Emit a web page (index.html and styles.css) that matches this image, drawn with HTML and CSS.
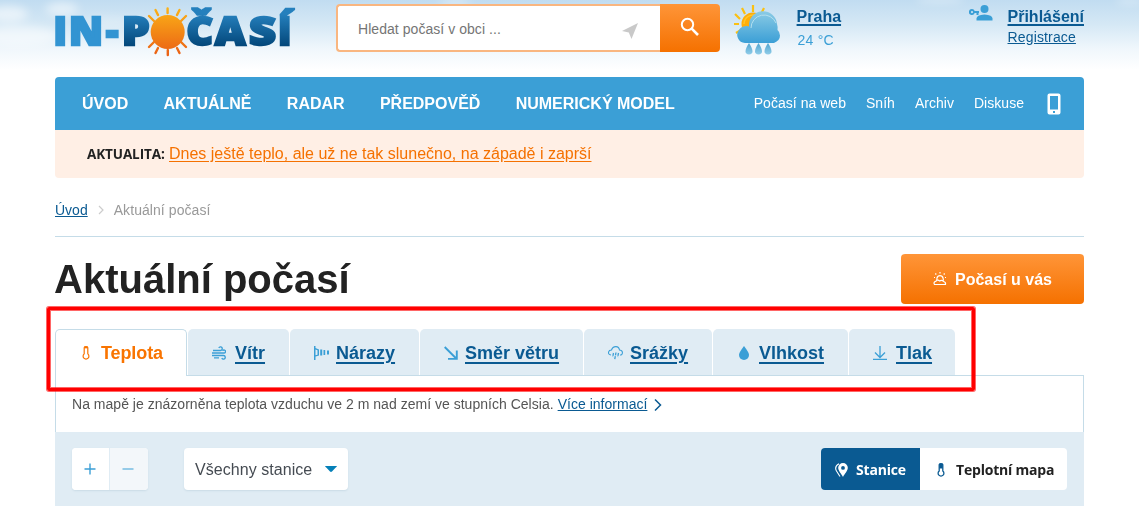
FILE: index.html
```
<!DOCTYPE html>
<html lang="cs">
<head>
<meta charset="utf-8">
<title>Aktuální počasí</title>
<link rel="stylesheet" href="styles.css">
</head>
<body>
<svg class="sky" width="1139" height="70" viewBox="0 0 1139 70" aria-hidden="true">
  <defs>
    <filter id="soft" x="-20%" y="-50%" width="140%" height="200%"><feGaussianBlur stdDeviation="5 4"/></filter>
    <linearGradient id="skyFill" x1="0" y1="0" x2="0" y2="1"><stop offset="0" stop-color="#c1dcf1"/><stop offset=".35" stop-color="#d5e8f5"/><stop offset=".7" stop-color="#f0f7fc"/><stop offset="1" stop-color="#fff"/></linearGradient>
  </defs>
  <rect width="1139" height="70" fill="url(#skyFill)"/>
  <g fill="#fff" filter="url(#soft)">
    <ellipse cx="8" cy="14" rx="20" ry="8" opacity=".55"/>
    <ellipse cx="62" cy="9" rx="16" ry="7" opacity=".5"/>
    <ellipse cx="18" cy="36" rx="40" ry="10" opacity=".5"/>
    <ellipse cx="110" cy="22" rx="24" ry="6" opacity=".2"/>
    <ellipse cx="455" cy="2" rx="16" ry="3" opacity=".5"/>
    <ellipse cx="940" cy="0" rx="24" ry="2" opacity=".6"/>
    <ellipse cx="1130" cy="1" rx="14" ry="3" opacity=".4"/>
  </g>
</svg>
<div class="page">
  <header class="header">
    <svg class="logo" width="242" height="60" viewBox="0 0 242 60">
      <defs>
        <linearGradient id="navy" gradientUnits="userSpaceOnUse" x1="0" y1="14" x2="0" y2="46"><stop offset="0" stop-color="#2580bd"/><stop offset="1" stop-color="#03477a"/></linearGradient>
        <linearGradient id="sun" gradientUnits="userSpaceOnUse" x1="0" y1="8" x2="0" y2="56"><stop offset="0" stop-color="#fbb117"/><stop offset="1" stop-color="#ea5f15"/></linearGradient>
      </defs>
      <g class="logo-text" lengthAdjust="spacingAndGlyphs">
        <g fill="#3294d2" stroke="#3294d2"><text x="-1.500" y="44.800">I</text><text x="14" y="44.800" textLength="34" lengthAdjust="spacingAndGlyphs">N</text><text x="51" y="44.800">-</text></g>
        <g fill="url(#navy)" stroke="url(#navy)"><text x="67" y="44.800" textLength="27.500" lengthAdjust="spacingAndGlyphs">P</text><text x="131.500" y="44.800" textLength="26.500" lengthAdjust="spacingAndGlyphs">Č</text><text x="160" y="44.800" textLength="30.500" lengthAdjust="spacingAndGlyphs">A</text><text x="194" y="44.800" textLength="27" lengthAdjust="spacingAndGlyphs">S</text><text x="223" y="44.800">Í</text></g>
      </g>
      <circle cx="112.700" cy="32" r="17" fill="url(#sun)"/>
      <path d="M112.600 13V8.500M112.800 50v5M122 15l2.500-5M103 15l-2.500-5M126 21l5-5M99 21l-5-5M126 42l5 5M99 42l-5 5M122 48l2.500 5M103 48l-2.500 5" stroke="url(#sun)" stroke-width="2.400" stroke-linecap="round"/>
    </svg>
    <form class="search">
      <div class="field"><span>Hledat počasí v obci ...</span>
        <svg width="16" height="16" viewBox="0 0 16 16"><path d="M16 0 9.500 16 6.800 9.500 0 8z" fill="#c9c9c9"/></svg>
      </div>
      <button class="search-btn" type="button" aria-label="Hledat"><svg width="20" height="20" viewBox="0 0 20 20" fill="none" stroke="#fff" stroke-width="2"><circle cx="7.500" cy="7.500" r="5.700"/><path d="M11.700 11.700 18 18" stroke-width="2.600"/></svg></button>
    </form>
    <svg class="weather" width="46" height="50" viewBox="0 0 46 50">
      <defs>
        <linearGradient id="cloud" x1="0" y1="0" x2="0" y2="1"><stop offset="0" stop-color="#8bcbe5"/><stop offset="1" stop-color="#3b9fd6"/></linearGradient>
        <linearGradient id="drop" x1="0" y1="0" x2="0" y2="1"><stop offset="0" stop-color="#4ea3cf"/><stop offset="1" stop-color="#91cde9"/></linearGradient>
      </defs>
      <path d="M19 7V0M27 9l3-6M11 9 8 3M32 13l4-4M6 14 1 9M5 19H0M7 25l-5 3" stroke="#fbc012" stroke-width="2.200"/>
      <circle cx="19" cy="19" r="11.500" fill="#ffae08"/><path d="M10 19a9 9 0 0 1 13-8" fill="none" stroke="#ffc62b" stroke-width="1.500"/>
      <path d="M11 38a8 8 0 0 1-6-13q2-4 8-4 1 0 2 .500A13.500 13.500 0 0 1 43 19q1 3 .500 6 2.500 2 2.500 5.500 0 5-6 7.500z" fill="url(#cloud)"/>
      <path d="M17 23a13 13 0 0 1 25-5" fill="none" stroke="#b4e0ef" stroke-width="1"/>
      <g fill="url(#drop)"><path d="M15 38q7 11 0 11.500Q8 49 15 38z"/><path d="M24.500 38q7 11 0 11.500-7-.500 0-11.500z"/><path d="M34 38q7 11 0 11.500-7-.500 0-11.500z"/></g>
    </svg>
    <div class="city"><a href="#">Praha</a><span>24 °C</span></div>
    <svg class="user" width="24" height="16" viewBox="0 0 24 16" fill="#3b9fd6"><circle cx="15.500" cy="4" r="4"/><path d="M7.500 15.500v-2q0-3.500 8-4 8 .500 8 4v2z"/><path fill-rule="evenodd" d="M3 4a3 3 0 0 1 2.700 2H10v2H9.500v2h-2V8H5.700A3 3 0 1 1 3 4zm0 2a1.100 1.100 0 1 0 0 2.200A1.100 1.100 0 0 0 3 6z"/></svg>
    <div class="account"><a class="login" href="#">Přihlášení</a><a class="register" href="#">Registrace</a></div>
  </header>

  <nav class="nav">
    <div class="nav-main"><a>ÚVOD</a><a>AKTUÁLNĚ</a><a>RADAR</a><a>PŘEDPOVĚĎ</a><a>NUMERICKÝ MODEL</a></div>
    <div class="nav-side"><a>Počasí na web</a><a>Sníh</a><a>Archiv</a><a>Diskuse</a>
      <svg width="14" height="22" viewBox="0 0 14 22"><path fill-rule="evenodd" fill="#fff" d="M2.500.500h9a2 2 0 0 1 2 2v17a2 2 0 0 1-2 2h-9a2 2 0 0 1-2-2v-17a2 2 0 0 1 2-2zM3 3v13.500h8V3zm3 15v2h2v-2z"/></svg>
    </div>
  </nav>
  <div class="news"><strong>AKTUALITA:</strong><a href="#">Dnes ještě teplo, ale už ne tak slunečno, na západě i zaprší</a></div>

  <div class="crumbs"><a href="#">Úvod</a><svg width="6" height="10" viewBox="0 0 6 10" fill="none" stroke="#ccc" stroke-width="1.200"><path d="m1 1 4 4-4 4"/></svg><span>Aktuální počasí</span></div>
  <div class="title-row">
    <h1>Aktuální počasí</h1>
    <a class="cta"><svg width="14" height="14" viewBox="0 0 14 14" fill="none" stroke="#fff" stroke-width="1.200"><path d="M3.800 8 4 6a3.100 3.100 0 0 1 6 0l.500 2.500M4 8.200q1.500-.500 2.500.800 2.500-1.500 4 .500 2.500.500 2 3H1.500Q0 10 3 9.200zM7 0v1.500M1 5.500h1M12 5.500h1M2.300 1.500l1 1M11.700 1.500l-1 1"/></svg><span>Počasí u vás</span></a>
  </div>

  <div class="tabs">
    <a class="tab active t1"><svg width="8" height="14" viewBox="0 0 8 14" fill="none" stroke="#f97400" stroke-width="1.200"><path d="M2.200 1.700q.3-1 1.800-1t1.800 1v6.200a2.900 2.900 0 1 1-3.600 0z"/><path d="M2.200 1.500h3.600" stroke-width="1.700"/></svg><span>Teplota</span></a>
    <a class="tab t2"><svg width="14" height="14" viewBox="0 0 14 14" fill="none" stroke="#3b9fd6" stroke-width="1.300"><path d="M1 4.500h7.500a1.800 1.800 0 1 0-1.700-2.500M0 7h12a1.500 1.500 0 1 0-1.300-2.200M0 9.500h11.500a1.800 1.800 0 1 1-1.700 2.500M2 11.900h5"/></svg><span>Vítr</span></a>
    <a class="tab t3"><svg width="15" height="14" viewBox="0 0 15 14" fill="#3b9fd6"><path d="M0 0h1.500v14H0zM1.500 2 5 3.500v6l-3.500 1V9.300l2-.5V4.200l-2-.8zM6.200 3.500h2v6h-2zM9.500 4h1.700v5H9.500zM13 4.500h2v4h-2z"/></svg><span>Nárazy</span></a>
    <a class="tab t4"><svg width="14" height="14" viewBox="0 0 14 14" fill="none" stroke="#3b9fd6" stroke-width="1.900"><path d="m.7 1 12 12M4 12.900h8.800V4.500"/></svg><span>Směr větru</span></a>
    <a class="tab t5"><svg width="15" height="14" viewBox="0 0 15 14" fill="none" stroke="#3b9fd6" stroke-width="1.100"><path d="M3 9Q0 8.500.600 6 1 4 3.500 4q1-3.500 4.500-3.400Q11 .700 11.500 4q2.500 0 2.900 2.200Q14.500 9 12 9"/><path d="m5.500 7-.8 4M8 6.500l-1.300 7M10.500 7l-.8 4" stroke-width="1.300" stroke-dasharray="3 .8"/></svg><span>Srážky</span></a>
    <a class="tab t6"><svg width="10" height="14" viewBox="0 0 10 14"><path d="M5 0q5 6.500 5 9a5 5 0 0 1-10 0q0-2.500 5-9z" fill="#3b9fd6"/></svg><span>Vlhkost</span></a>
    <a class="tab t7"><svg width="14" height="14" viewBox="0 0 14 14" fill="none" stroke="#3b9fd6" stroke-width="1.300"><path d="M7 0v11.500M2 6.500l5 5 5-5M0 13.300h14"/></svg><span>Tlak</span></a>
  </div>
  <div class="info"><span>Na mapě je znázorněna teplota vzduchu ve 2 m nad zemí ve stupních Celsia.</span><a href="#">Více informací</a><svg width="8" height="14" viewBox="0 0 8 14" fill="none" stroke="#0a5a92" stroke-width="1.500"><path d="m1 1.500 5.500 5.500L1 12.500"/></svg></div>
  <div class="toolbar">
    <div class="zoom"><button aria-label="Přiblížit"><svg width="12" height="12" viewBox="0 0 12 12" stroke="#3b9fd6" stroke-width="1.400"><path d="M6 .500v11M.500 6h11"/></svg></button><button class="off" aria-label="Oddálit"><svg width="12" height="12" viewBox="0 0 12 12" stroke="#76bce2" stroke-width="1.400"><path d="M.500 6h11"/></svg></button></div>
    <div class="select"><span>Všechny stanice</span><svg width="12" height="6" viewBox="0 0 12 6"><path d="M0 0h12q-.5 1-1.500 1.800L7 5.500q-1 .8-2 0L1.500 1.800Q.500 1 0 0z" fill="#0580b8"/></svg></div>
    <div class="switch">
      <a class="on"><svg width="13" height="14" viewBox="0 0 13 14"><path fill="#fff" fill-rule="evenodd" d="M8 0a4.800 4.800 0 0 1 4.800 4.800C12.800 8 9.500 11 8 14 6.500 11 3.200 8 3.200 4.800A4.800 4.800 0 0 1 8 0zm0 3a1.900 1.900 0 1 0 0 3.800A1.900 1.900 0 0 0 8 3z"/><path d="M4 .700Q-1 3.500 1.500 8 4 12 5 13.500" fill="none" stroke="#fff" stroke-width="1.100"/></svg><span>Stanice</span></a>
      <a class="map"><svg width="8" height="14" viewBox="0 0 8 14" fill="none" stroke="#0a5a92" stroke-width="1.300"><path d="M2.200 1.700q.3-1 1.800-1t1.800 1v6.200a2.900 2.900 0 1 1-3.600 0z"/><path d="M4 1v4.500" stroke-width="3.400"/></svg><span>Teplotní mapa</span></a>
    </div>
  </div>
</div>
<div class="highlight"></div>
</body>
</html>
```
FILE: styles.css
```
* { box-sizing: border-box; }
body { margin: 0; width: 1139px; height: 506px; overflow: hidden; position: relative; background: #fff; color: #222; font: 14px/20px "Liberation Sans", Arial, sans-serif; }
a { color: #0a5a92; }
svg { display: block; flex: none; }
span, strong, a { white-space: nowrap; }
.sky { position: absolute; left: 0; top: 0; z-index: -1; }
.page { width: 1029px; margin-left: 55px; }

.header { display: flex; height: 77px; align-items: flex-start; }
.logo { overflow: visible; }
.logo-text { font: 800 38.500px "Open Sans", sans-serif; stroke-width: 2.400px; }
.search { display: flex; width: 384px; height: 48px; margin: 4px 0 0 39px; }
.field { flex: 1; display: flex; justify-content: space-between; align-items: center; border: 2px solid #f9b680; border-right: 0; border-radius: 4px 0 0 4px; background: #fff; padding: 2px 22px 0 20px; color: #757575; letter-spacing: .05px; }
.field svg { margin-top: 3px; }
.search-btn { width: 60px; border: 0; border-radius: 0 4px 4px 0; background: linear-gradient(#ff9538, #f57100); padding: 0 0 3px 20px; }
.weather { margin: 5px 0 0 14px; }
.city { display: flex; flex-direction: column; width: 50px; margin: 6px 0 0 17px; }
.city a { font-size: 16px; line-height: 21px; font-weight: bold; }
.city span { margin-top: 3px; line-height: 21px; color: #3b9fd6; padding-left: 1px; letter-spacing: .2px; }
.user { margin: 5px 0 0 122px; }
.account { display: flex; flex-direction: column; margin: 6px 0 0 15px; }
.login { font-size: 16px; line-height: 21px; font-weight: bold; }
.register { line-height: 20px; letter-spacing: .15px; }
.city a, .login { text-decoration-thickness: 2px; text-underline-offset: 2px; }

.nav { display: flex; justify-content: space-between; height: 53px; align-items: center; background: #3b9fd6; border-radius: 4px 4px 0 0; padding: 0 23px 0 27px; }
.nav a { color: #fff; }
.nav-main { display: flex; gap: 35.300px; font-size: 16px; font-weight: bold; }
.nav-side { display: flex; align-items: center; gap: 20px; }
.nav-side a { padding-bottom: 2px; letter-spacing: .03px; }
.nav-side svg { margin-left: 3px; }
.news { display: flex; align-items: center; height: 48px; padding-left: 32px; background: #ffefe5; border-radius: 0 0 4px 4px; }
.news strong { width: 82px; font-family: "Open Sans", sans-serif; font-size: 13.500px; letter-spacing: -.1px; }
.news a { color: #f57100; font-size: 16px; text-underline-offset: 2px; }

.crumbs { display: flex; align-items: center; height: 59px; padding-top: 6px; border-bottom: 1px solid #c5dce8; color: #999; }
.crumbs svg { margin: 0 10px; }
.crumbs span { letter-spacing: .07px; }
.title-row { display: flex; justify-content: space-between; height: 92px; padding-top: 17px; }
h1 { margin: 0 0 0 -1px; font-size: 40px; line-height: 50px; }
.cta { display: flex; width: 183px; height: 50px; align-items: center; gap: 8px; padding-left: 32px; border-radius: 4px; background: linear-gradient(#ff9538, #f57100); color: #fff; font-size: 16px; font-weight: bold; }
.cta span { padding-top: 2px; }

.tabs { display: flex; gap: 1px; height: 47px; position: relative; z-index: 1; }
.tab { display: flex; align-items: center; height: 46px; padding: 2px 0 0 24px; gap: 9px; border-radius: 5px 5px 0 0; background: #e0ecf4; color: #0a5a92; font-size: 18px; font-weight: bold; }
.tab span { text-decoration: underline; text-decoration-thickness: 2px; text-underline-offset: 3px; }
.tab.active { height: 47px; border: 1px solid #c5dce8; border-bottom: 0; background: #fff; color: #f97400; padding: 0 0 0 26px; gap: 11px; letter-spacing: -.1px; }
.tab.active span { text-decoration: none; }
.t1 { width: 132px; } .t2 { width: 101px; } .t3 { width: 129px; } .t4 { width: 163px; } .t5 { width: 128px; } .t6 { width: 135px; } .t7 { width: 106px; }
.tab.t3, .tab.t4, .tab.t5 { gap: 7px; }
.tab.t6 { padding-left: 26px; gap: 10px; }
.info { display: flex; align-items: center; height: 57px; margin-top: -1px; padding: 0 0 1px 16px; border: 1px solid #c5dce8; border-bottom: 0; color: #555; letter-spacing: .02px; }
.info svg { margin-top: 2px; }
.info a { margin: 0 7px 0 4px; }

.toolbar { display: flex; height: 74px; padding: 16px 17px; background: #e0ecf4; }
.zoom, .select, .switch { display: flex; height: 42px; border-radius: 4px; background: #fff; }
.zoom, .select { box-shadow: 0 1px 2px #c9dbe6; }
.zoom { overflow: hidden; }
.zoom button { width: 37px; border: 0; padding: 0 0 0 12px; background: #fff; }
.zoom .off { width: 39px; border-left: 1px solid #e0ecf4; background: #f3f7fa; padding-left: 12px; }
.select { width: 164px; margin-left: 36px; align-items: center; justify-content: space-between; padding: 0 11px; color: #454b52; font-size: 16px; letter-spacing: .05px; }
.select span { padding-top: 2px; }
.switch { margin-left: auto; font-family: "Open Sans", sans-serif; font-weight: bold; letter-spacing: -.2px; }
.switch a { display: flex; align-items: center; gap: 8px; color: #222; }
.switch span { padding-top: 2px; }
.switch svg { margin-top: 2px; }
.switch .on { width: 99px; padding-left: 14px; background: #0a5a92; border-radius: 4px 0 0 4px; color: #fff; }
.switch .map { width: 147px; padding-left: 17px; gap: 11px; }

/* Frame drawn over the tab strip */
.highlight { position: absolute; left: 47px; top: 307px; width: 928px; height: 84px; border: 3px solid #ff0000; border-radius: 2px; z-index: 5; box-shadow: 0 0 0 1px rgba(255, 0, 0, .6), inset 0 0 0 1px rgba(255, 0, 0, .6); }
```
